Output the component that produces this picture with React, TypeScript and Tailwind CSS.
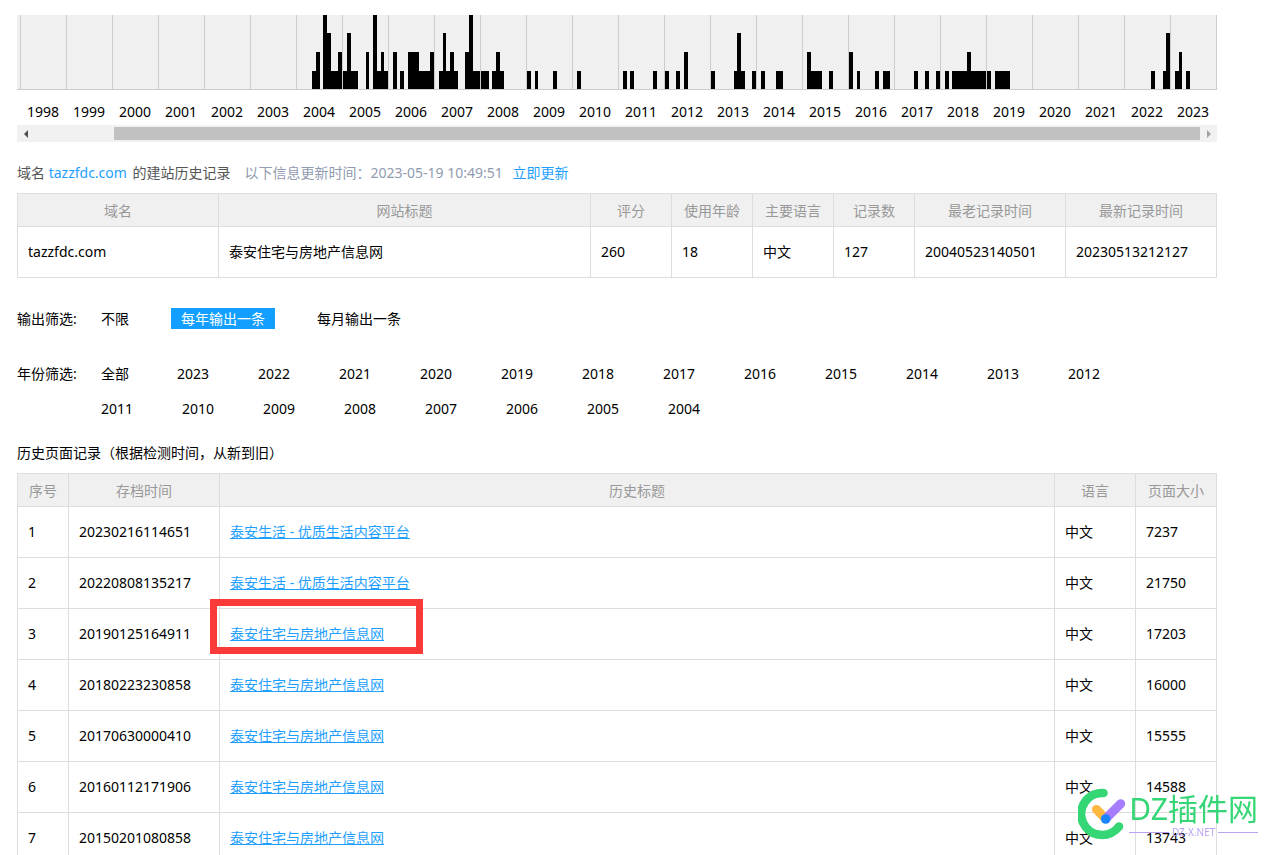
const YEARS: { year: number; months: number[] }[] = [
  { year: 1998, months: [] },
  { year: 1999, months: [] },
  { year: 2000, months: [] },
  { year: 2001, months: [] },
  { year: 2002, months: [] },
  { year: 2003, months: [] },
  { year: 2004, months: [0, 0, 0, 0, 1, 2, 0, 4, 3, 1, 1, 2] },
  { year: 2005, months: [1, 3, 1, 1, 0, 0, 2, 0, 4, 1, 2, 1] },
  { year: 2006, months: [0, 2, 0, 1, 0, 2, 2, 2, 1, 1, 1, 2] },
  { year: 2007, months: [0, 1, 3, 1, 2, 1, 0, 0, 2, 4, 1, 1] },
  { year: 2008, months: [1, 1, 0, 1, 2, 1, 0, 0, 0, 0, 0, 0] },
  { year: 2009, months: [1, 0, 1, 0, 0, 0, 0, 1, 0, 0, 0, 0] },
  { year: 2010, months: [0, 1, 0, 0, 0, 0, 0, 0, 0, 0, 0, 0] },
  { year: 2011, months: [0, 1, 0, 1, 0, 0, 0, 0, 0, 1, 0, 0] },
  { year: 2012, months: [1, 0, 0, 1, 0, 2, 0, 0, 0, 0, 0, 0] },
  { year: 2013, months: [1, 0, 0, 0, 0, 0, 1, 3, 1, 0, 0, 1] },
  { year: 2014, months: [0, 1, 0, 0, 0, 1, 1, 0, 0, 0, 0, 0] },
  { year: 2015, months: [0, 2, 1, 1, 1, 0, 0, 1, 0, 0, 0, 0] },
  { year: 2016, months: [2, 0, 1, 0, 0, 0, 0, 1, 0, 1, 1, 0] },
  { year: 2017, months: [0, 0, 0, 0, 0, 1, 0, 0, 1, 0, 0, 1] },
  { year: 2018, months: [0, 1, 0, 1, 1, 1, 1, 2, 1, 1, 1, 1] },
  { year: 2019, months: [1, 0, 1, 1, 1, 1, 0, 0, 0, 0, 0, 0] },
  { year: 2020, months: [] },
  { year: 2021, months: [] },
  { year: 2022, months: [0, 0, 0, 0, 0, 0, 0, 1, 0, 0, 1, 3] },
  { year: 2023, months: [0, 1, 2, 0, 1, 0, 0, 0, 0, 0, 0, 0] },
];

// bar height in percent for 0-4 snapshots a month
const BAR_HEIGHTS = [0, 25, 50, 76, 100];

const OUTPUT_OPTIONS = ["不限", "每年输出一条", "每月输出一条"];

const YEAR_OPTIONS = [
  "全部", "2023", "2022", "2021", "2020", "2019", "2018", "2017", "2016", "2015", "2014",
  "2013", "2012", "2011", "2010", "2009", "2008", "2007", "2006", "2005", "2004",
];

const SITE = "泰安住宅与房地产信息网";

interface HistoryRecord {
  time: string;
  title: string;
  size: number;
  marked?: boolean;
}

const RECORDS: HistoryRecord[] = [
  { time: "20230216114651", title: "泰安生活 - 优质生活内容平台", size: 7237 },
  { time: "20220808135217", title: "泰安生活 - 优质生活内容平台", size: 21750 },
  { time: "20190125164911", title: SITE, size: 17203, marked: true },
  { time: "20180223230858", title: SITE, size: 16000 },
  { time: "20170630000410", title: SITE, size: 15555 },
  { time: "20160112171906", title: SITE, size: 14588 },
  { time: "20150201080858", title: SITE, size: 13743 },
];

const Timeline = () => {
  return (
    <section>
      <div className="flex h-[75px] border-r border-b border-[#ccc] bg-[#f0f0f0] pl-[3px]">
        {YEARS.map(({ year, months }) => (
          <div key={year} className="flex flex-1 items-end border-l border-[#ccc]">
            {months.map((count, i) => (
              <div key={i} className="flex-1 bg-black" style={{ height: `${BAR_HEIGHTS[count]}%` }} />
            ))}
          </div>
        ))}
      </div>
      <div className="flex pt-[11px] pr-px pl-[3px]">
        {YEARS.map(({ year }) => (
          <div key={year} className="flex-1 text-center">{year}</div>
        ))}
      </div>
      <div className="mt-[3px] flex h-[17px] bg-[#f1f1f1]">
        <button aria-label="向左滚动" className="flex w-[17px] items-center justify-center">
          <svg width="4" height="8" viewBox="0 0 4 8" fill="#505050"><path d="M4 0v8L0 4z" /></svg>
        </button>
        <div className="my-[2px] ml-20 flex-1 bg-[#c1c1c1]" />
        <button aria-label="向右滚动" className="flex w-[17px] items-center justify-center">
          <svg width="4" height="8" viewBox="0 0 4 8" fill="#a3a3a3"><path d="M0 0v8l4-4z" /></svg>
        </button>
      </div>
    </section>
  );
};

const Th = ({ children, className = "" }: { children: string; className?: string }) => (
  <th className={`h-[33px] border border-[#ddd] bg-[#f0f0f0] p-0 text-center font-normal text-[#999] ${className}`}>
    {children}
  </th>
);

const Td = ({ children }: { children: React.ReactNode }) => (
  <td className="h-[51px] border border-[#ddd] px-[10px] pt-0 pb-[2px]">{children}</td>
);

const Summary = () => {
  return (
    <section>
      <p className="mt-5 mb-[10px] text-[#555]">
        域名 <a href="#" className="mr-[2px] text-[#1e9fff]">tazzfdc.com</a> 的建站历史记录
        <span className="mr-[6px] ml-[14px] text-[#909bb0]">以下信息更新时间：2023-05-19 10:49:51</span>{" "}
        <a href="#" className="text-[#1e9fff]">立即更新</a>
      </p>
      <table className="w-full table-fixed border-collapse">
        <thead>
          <tr>
            <Th className="w-[201px]">域名</Th>
            <Th>网站标题</Th>
            <Th className="w-[81px]">评分</Th>
            <Th className="w-[81px]">使用年龄</Th>
            <Th className="w-[81px]">主要语言</Th>
            <Th className="w-[81px]">记录数</Th>
            <Th className="w-[151px]">最老记录时间</Th>
            <Th className="w-[151px]">最新记录时间</Th>
          </tr>
        </thead>
        <tbody>
          <tr>
            <Td>tazzfdc.com</Td>
            <Td>{SITE}</Td>
            <Td>260</Td>
            <Td>18</Td>
            <Td>中文</Td>
            <Td>127</Td>
            <Td>20040523140501</Td>
            <Td>20230513212127</Td>
          </tr>
        </tbody>
      </table>
    </section>
  );
};

const Filters = () => {
  return (
    <section>
      <div className="mt-[30px] flex">
        <span className="w-[74px] shrink-0">输出筛选:</span>
        <div className="flex gap-8">
          {OUTPUT_OPTIONS.map((option, i) => (
            <button key={option} className={i === 1 ? "bg-[#129fff] px-[10px] text-white" : "px-[10px]"}>
              {option}
            </button>
          ))}
        </div>
      </div>
      <div className="mt-[34px] flex">
        <span className="w-[74px] shrink-0">年份筛选:</span>
        <div className="flex flex-wrap gap-y-[14px]">
          {YEAR_OPTIONS.map((option, i) => (
            <button
              key={option}
              className={i === 0 ? "mr-7 w-12 px-[10px] text-left" : "mr-7 w-[53px] px-[10px] text-left"}
            >
              {option}
            </button>
          ))}
        </div>
      </div>
    </section>
  );
};

const History = () => {
  return (
    <section>
      <h2 className="mt-[23px] mb-[10px]">历史页面记录（根据检测时间，从新到旧）</h2>
      <table className="w-full table-fixed border-collapse">
        <thead>
          <tr>
            <Th className="w-[51px]">序号</Th>
            <Th className="w-[151px]">存档时间</Th>
            <Th>历史标题</Th>
            <Th className="w-[81px]">语言</Th>
            <Th className="w-[81px]">页面大小</Th>
          </tr>
        </thead>
        <tbody>
          {RECORDS.map((record, i) => (
            <tr key={record.time}>
              <Td>{i + 1}</Td>
              <Td>{record.time}</Td>
              <Td>
                <div className="relative">
                  <a href="#" className="text-[#1e9fff] underline">{record.title}</a>
                  {record.marked && (
                    <span className="pointer-events-none absolute -top-6 -left-5 h-[55px] w-[213px] border-[7px] border-[#fa3939]" />
                  )}
                </div>
              </Td>
              <Td>中文</Td>
              <Td>{record.size}</Td>
            </tr>
          ))}
        </tbody>
      </table>
    </section>
  );
};

const Watermark = () => {
  return (
    <div className="pointer-events-none fixed right-5 bottom-[15px] flex items-center gap-[3px]">
      <svg width="48" height="52" viewBox="0 0 48 52" fill="none" strokeLinecap="round">
        <path d="M25.5 5A21 21 0 1 0 41 38.5" stroke="#35d675" strokeWidth="8.6" />
        <path d="M18.5 21.5l9 9" stroke="#ffb83f" strokeWidth="9" />
        <path d="M27.7 30.7l15-15" stroke="#a67dff" strokeWidth="9" />
        <circle cx="27.7" cy="31" r="4.8" fill="#1b84ff" />
      </svg>
      <div>
        <div className="text-[30px] leading-[36px] text-[#35d675]">DZ插件网</div>
        <div className="flex items-center gap-[3px] text-[10px] leading-[10px] text-[#b9a2f5]">
          <span className="h-px flex-1 bg-[#b9a2f5]" />
          DZ-X.NET
          <span className="h-px flex-1 bg-[#b9a2f5]" />
        </div>
      </div>
    </div>
  );
};

const App = () => {
  return (
    <main className="h-screen overflow-hidden bg-white pt-[15px] pr-[61px] pl-[17px] font-['Noto_Sans','Noto_Sans_CJK_SC',sans-serif] text-[14px] leading-[21px] text-black">
      <Timeline />
      <Summary />
      <Filters />
      <History />
      <Watermark />
    </main>
  );
};

export default App;
